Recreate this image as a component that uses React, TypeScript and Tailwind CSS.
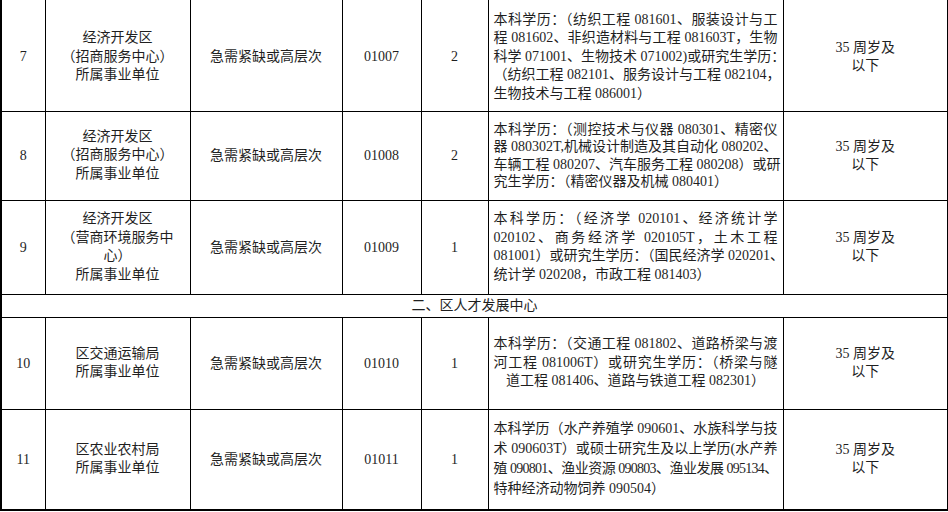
import React from "react";

type Line = { t: string; j?: boolean; tight?: boolean };

type Row = {
  no: string;
  unit: string[];
  code: string;
  count: string;
  req: Line[];
  center?: boolean;
  h: string;
  lead: string;
  pad?: string;
};

const ROWS: Row[] = [
  {
    no: "7",
    unit: ["经济开发区", "（招商服务中心）", "所属事业单位"],
    code: "01007",
    count: "2",
    h: "h-[112px]",
    lead: "leading-[18.5px]",
    pad: "pt-[3px]",
    req: [
      { t: "本科学历：（纺织工程 081601、服装设计与工", j: true },
      { t: "程 081602、非织造材料与工程 081603T，生物", j: true },
      { t: "科学 071001、生物技术 071002)或研究生学历：", j: true },
      { t: "（纺织工程 082101、服务设计与工程 082104，", j: true },
      { t: "生物技术与工程 086001）" },
    ],
  },
  {
    no: "8",
    unit: ["经济开发区", "（招商服务中心）", "所属事业单位"],
    code: "01008",
    count: "2",
    h: "h-[89px]",
    lead: "leading-[17.5px]",
    req: [
      { t: "本科学历：（测控技术与仪器 080301、精密仪", j: true },
      { t: "器 080302T,机械设计制造及其自动化 080202、", j: true },
      { t: "车辆工程 080207、汽车服务工程 080208）或研", j: true },
      { t: "究生学历：（精密仪器及机械 080401）" },
    ],
  },
  {
    no: "9",
    unit: ["经济开发区", "（营商环境服务中", "心）", "所属事业单位"],
    code: "01009",
    count: "1",
    h: "h-[94px]",
    lead: "leading-[18.5px]",
    req: [
      { t: "本科学历：（经济学 020101、经济统计学", j: true },
      { t: "020102、商务经济学 020105T，土木工程", j: true },
      { t: "081001）或研究生学历：（国民经济学 020201、", j: true },
      { t: "统计学 020208，市政工程 081403）" },
    ],
  },
];

const ROWS2: Row[] = [
  {
    no: "10",
    unit: ["区交通运输局", "所属事业单位"],
    code: "01010",
    count: "1",
    h: "h-[92px]",
    lead: "leading-[18.5px]",
    center: true,
    req: [
      { t: "本科学历：（交通工程 081802、道路桥梁与渡", j: true },
      { t: "河工程 081006T）或研究生学历：（桥梁与隧", j: true },
      { t: "道工程 081406、道路与铁道工程 082301）" },
    ],
  },
  {
    no: "11",
    unit: ["区农业农村局", "所属事业单位"],
    code: "01011",
    count: "1",
    h: "h-[101px]",
    lead: "leading-[20px]",
    req: [
      { t: "本科学历（水产养殖学 090601、水族科学与技", j: true },
      { t: "术 090603T）或硕士研究生及以上学历(水产养", j: true },
      { t: "殖 090801、渔业资源 090803、渔业发展 095134、", j: true, tight: true },
      { t: "特种经济动物饲养 090504）" },
    ],
  },
];

const cell = "border border-black align-middle p-0";

function PostRow({ row }: { row: Row }) {
  const pad = row.pad ?? "";
  return (
    <tr className={row.h}>
      <td className={`${cell} ${pad} text-center`}>{row.no}</td>
      <td className={`${cell} ${pad} text-center leading-[18.5px]`}>
        {row.unit.map((u) => (
          <div key={u}>{u}</div>
        ))}
      </td>
      <td className={`${cell} ${pad} text-center`}>急需紧缺或高层次</td>
      <td className={`${cell} ${pad} text-center`}>{row.code}</td>
      <td className={`${cell} ${pad} text-center`}>{row.count}</td>
      <td className={`${cell} ${pad} px-[5px] ${row.lead} ${row.center ? "text-center" : "text-left"}`}>
        {row.req.map((l) => (
          <div
            key={l.t}
            className={`whitespace-nowrap ${l.j ? "text-justify [text-align-last:justify]" : ""} ${
              l.tight ? "tracking-[-0.75px]" : ""
            }`}
          >
            {l.t}
          </div>
        ))}
      </td>
      <td className={`${cell} ${pad} text-center leading-[18px]`}>
        <div>35 周岁及</div>
        <div>以下</div>
      </td>
    </tr>
  );
}

export default function App() {
  return (
    <div className="w-[948px] h-[512px] overflow-hidden bg-white">
      <table className="-mt-[2px] w-[947px] table-fixed border-collapse border-2 border-black text-[14px] text-[#1f1f1f] font-['Liberation_Serif','Noto_Sans_CJK_SC',serif]">
        <colgroup>
          <col className="w-[44px]" />
          <col className="w-[145px]" />
          <col className="w-[152px]" />
          <col className="w-[79px]" />
          <col className="w-[67px]" />
          <col className="w-[295px]" />
          <col className="w-[165px]" />
        </colgroup>
        <tbody>
          {ROWS.map((r) => (
            <PostRow key={r.no} row={r} />
          ))}
          <tr className="h-[23px]">
            <td colSpan={7} className={`${cell} text-center`}>
              二、区人才发展中心
            </td>
          </tr>
          {ROWS2.map((r) => (
            <PostRow key={r.no} row={r} />
          ))}
        </tbody>
      </table>
    </div>
  );
}
